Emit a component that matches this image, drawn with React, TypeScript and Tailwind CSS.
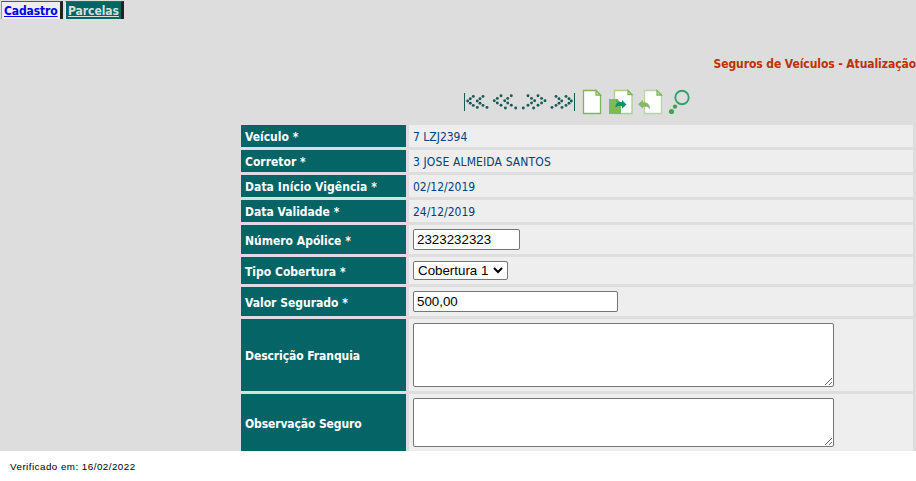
import React from "react";

const tahoma = "font-['DejaVu_Sans_Condensed','DejaVu_Sans',sans-serif] [font-stretch:condensed]";
const arial = "font-['Liberation_Sans',Arial,sans-serif]";
const box = "block border border-[#767676] rounded-[2px] bg-white";

const first: number[][] = [[12.7,21],[15.3,18.7],[18.3,16.4],[15.3,23.3],[18.3,25.4],[22.3,27.4],[22.3,21],[25,18.7],[28,16.4],[25,23.3],[28,25.4],[32,27.4]];
const prev: number[][] = [[39.3,20.7],[42.3,18.4],[46,15.7],[42.3,23],[46,25.2],[50.4,28],[49.7,20.7],[52.7,18.4],[56.3,15.7],[52.7,23],[56.3,25.2],[60.7,28]];
const next: number[][] = [[68.3,28],[73,25.2],[76.5,23],[79.6,20.7],[76.5,18.4],[73,15.7],[78.6,28],[83,25.2],[86.6,23],[90,20.7],[86.6,18.4],[83,15.7]];
const last: number[][] = [[97,27.4],[101,25.4],[104,23.3],[106.7,21],[104,18.7],[101,16.4],[107,27.4],[111,25.4],[114,23.3],[116.3,21],[114,18.7],[111,16.4]];

function Arrows() {
  return (
    <svg width="125" height="45" viewBox="0 0 125 45" className="block">
      <g fill="#145c54">
        {[first, prev, next, last].flat().map(([x, y], i) => (
          <circle key={i} cx={x} cy={y} r="1.45" />
        ))}
        <rect x="9" y="13" width="1" height="18" />
        <rect x="119" y="13" width="1" height="18" />
      </g>
    </svg>
  );
}

function Tools() {
  return (
    <svg width="125" height="45" viewBox="0 0 125 45" className="block">
      <g fill="#fff" strokeWidth="1.3">
        <path d="M8.5 10.5H21L25.5 15V33.5H8.5Z" stroke="#7db65a" />
        <path d="M21 10.5V15H25.5Z" fill="#d5e9c9" stroke="#7db65a" />
        <path d="M39.5 10.5H53L57 14.5V33.5H39.5Z" stroke="#a7d08f" />
        <path d="M53 10.5V14.5H57Z" fill="#d5e9c9" stroke="#7db65a" />
        <path d="M69.5 10.5H82L86.5 15V33.5H69.5Z" stroke="#b5d6a4" />
        <path d="M82 10.5V15H86.5Z" fill="#d5e9c9" stroke="#7db65a" />
      </g>
      <path d="M34 19H42L46 22.5V34H34Z" fill="#80b957" />
      <path d="M42 19V22.5H46" fill="none" stroke="#4f9c50" />
      <path d="M40.5 27.5C40 23.5 43 21.5 47 22.2V20L51.5 24.5L47 28.8V26.3C44 25.5 42 25.8 40.5 27.5Z" fill="#159070" />
      <path d="M67.5 22.8H71V26.8H67.5Z" fill="#86ba69" />
      <path d="M63 24.3L68 19.7V22.2C72 22 75.5 24.5 75 29.3C73 26.5 70.5 26.2 68 26.3V28.8Z" fill="#86ba69" />
      <circle cx="107" cy="17.5" r="6.7" fill="none" stroke="#38a169" strokeWidth="1.9" />
      <circle cx="100" cy="26.6" r="2.2" fill="#45a253" />
      <circle cx="96.5" cy="31.5" r="2.6" fill="#45a253" />
    </svg>
  );
}

function Row({ label, h, children, spacing = "" }: { label: string; h: string; children: React.ReactNode; spacing?: string }) {
  return (
    <div className={`flex gap-[3px] shrink-0 ${h}`}>
      <div className={`w-[165px] bg-[#056466] pl-1 pt-[2px] flex items-center font-bold text-white whitespace-nowrap ${spacing}`}>{label}</div>
      <div className="w-[504px] bg-[#eee] pl-1 flex items-center text-[#003f7d] whitespace-nowrap">{children}</div>
    </div>
  );
}

function Area({ h }: { h: string }) {
  return <textarea className={`${box} w-[421px] resize ${h}`} />;
}

export default function App() {
  return (
    <div className={`w-[916px] h-[481px] overflow-hidden bg-white text-xs ${tahoma}`}>
      <main className="h-[451px] overflow-hidden bg-[#ddd]">
        <nav className="flex gap-[2px] pt-px pl-px h-[54px] font-bold leading-[19px]">
          <a className="h-[18px] w-[62px] pl-[2px] tracking-[-0.12px] whitespace-nowrap bg-[#eee] text-[#0000ee] underline border-t border-l border-l-[#999] border-t-[#555] border-r-[3px] border-r-[#222]">Cadastro</a>
          <a className="h-[18px] w-[59px] pl-[2px] tracking-[-0.05px] whitespace-nowrap bg-[#056466] text-[#ddd] underline border-t border-l border-l-[#eee] border-t-[#555] border-r-[3px] border-r-[#222]">Parcelas</a>
        </nav>
        <h1 className="h-[26px] leading-[20px] text-right font-bold tracking-[-0.08px] text-[#c03000]">Seguros de Veículos - Atualização</h1>
        <div className="flex h-[45px] pl-[455px]">
          <Arrows />
          <div className="-ml-[5px]"><Tools /></div>
        </div>
        <div className="flex flex-col gap-[3px] pl-[241px]">
          <Row label="Veículo *" h="h-[22px]"><span className="pt-[2px]">7 LZJ2394</span></Row>
          <Row label="Corretor *" h="h-[22px]"><span className="pt-[2px] tracking-[0.13px]">3 JOSE ALMEIDA SANTOS</span></Row>
          <Row label="Data Início Vigência *" h="h-[22px]" spacing="tracking-[0.07px]"><span className="pt-[2px]">02/12/2019</span></Row>
          <Row label="Data Validade *" h="h-[22px]"><span className="pt-[2px]">24/12/2019</span></Row>
          <Row label="Número Apólice *" h="h-[29px]">
            <input defaultValue="2323232323" className={`${box} ${arial} w-[107px] h-[21px] px-[3px] text-[13.333px] text-black`} />
          </Row>
          <Row label="Tipo Cobertura *" h="h-[27px]">
            <div className={`${box} ${arial} w-[95px] h-[19px] pl-[4px] text-[13.333px] leading-[17px] text-black flex items-center`}>
              <span>Cobertura 1</span>
              <svg width="10" height="7" viewBox="0 0 10 7" className="ml-[5px]"><path d="M1 1L5 5L9 1" fill="none" stroke="#000" strokeWidth="2" /></svg>
            </div>
          </Row>
          <Row label="Valor Segurado *" h="h-[29px]">
            <input defaultValue="500,00" className={`${box} ${arial} w-[205px] h-[21px] px-[3px] text-[13.333px] text-black`} />
          </Row>
          <Row label="Descrição Franquia" h="h-[72px]" spacing="tracking-[-0.07px]"><Area h="h-[64px]" /></Row>
          <Row label="Observação Seguro" h="h-[57px]" spacing="tracking-[-0.11px]"><Area h="h-[49px]" /></Row>
        </div>
      </main>
      <footer className={`${arial} pl-[10px] pt-[10px] text-[9.8px] leading-[12px] tracking-[0.47px] text-black`}>Verificado em: 16/02/2022</footer>
    </div>
  );
}
